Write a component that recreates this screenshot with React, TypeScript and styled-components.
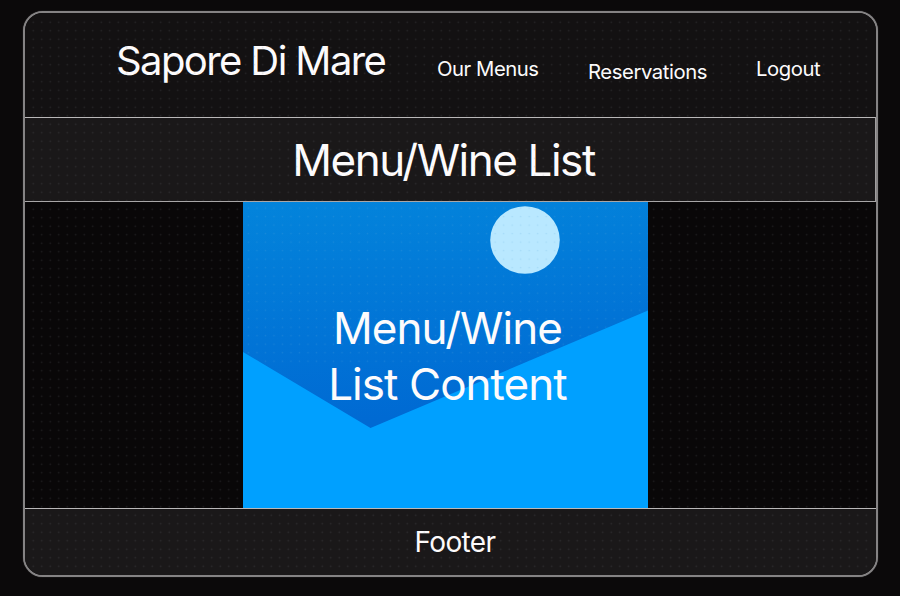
import React from "react";
import styled, { createGlobalStyle } from "styled-components";

const GlobalStyle = createGlobalStyle`
  * { box-sizing: border-box; }
  body {
    margin: 0;
    background: #0b090a;
    color: #fdfbfc;
    font-family: Inter, "Liberation Sans", sans-serif;
  }
`;

const Page = styled.div`
  width: 900px;
  height: 596px;
  padding: 11px 22px 19px 23px;
  overflow: hidden;
`;

const Frame = styled.div`
  position: relative;
  display: grid;
  grid-template-rows: 104px 84px 307px 1fr;
  height: 566px;
  border: 2px solid #858384;
  border-radius: 20px;
  box-shadow: 0 0 1px #6a6869;
  overflow: hidden;
  background: #0b090a;
`;

const DotGrid = styled.div`
  position: absolute;
  inset: 5px 5px 5px 4px;
  pointer-events: none;
  background-image: radial-gradient(circle at center, rgba(120, 125, 130, 0.22) 0.5px, transparent 1.1px);
  background-size: 8.507px 8.507px;
`;

const Header = styled.header`
  display: flex;
  align-items: flex-start;
  padding-left: 91px;
  background: #131112;
`;

const Label = styled.span<{ $size: number; $spacing: number }>`
  display: block;
  white-space: nowrap;
  line-height: 1.25;
  font-size: ${(p) => p.$size}px;
  letter-spacing: ${(p) => p.$spacing}px;
  font-weight: 400;
`;

const Brand = styled.div`
  width: 321px;
  padding-top: 23px;
`;

const Nav = styled.nav`
  display: flex;
`;

const NavItem = styled.a<{ $width: number; $drop: number }>`
  width: ${(p) => p.$width}px;
  padding-top: ${(p) => p.$drop}px;
  color: inherit;
`;

const Band = styled.section`
  display: flex;
  justify-content: center;
  align-items: center;
  padding: 2px 13px 0 0;
  background: #1a1819;
  border-top: 1px solid #b9b7b8;
  border-right: 1px solid #a09e9f;
`;

const Footer = styled(Band)`
  padding: 1px 0 0 9px;
  border-right: 0;
`;

const Content = styled.main`
  display: flex;
  padding-left: 218px;
  border-top: 1px solid #a9a7a8;
  background: #090708;
`;

const Picture = styled.div`
  position: relative;
  z-index: 1;
  display: grid;
  width: 405px;
  height: 306px;

  > * { grid-area: 1 / 1; }
`;

const Caption = styled.div`
  display: flex;
  flex-direction: column;
  align-items: center;
  padding: 98px 0 0 4px;
  z-index: 1;
`;

const Line = styled(Label)`
  line-height: 56px;
`;

function Scenery() {
  return (
    <svg width="405" height="306" viewBox="0 0 405 306" aria-hidden="true">
      <defs>
        <linearGradient id="sky" x1="0" y1="0" x2="18" y2="226" gradientUnits="userSpaceOnUse">
          <stop offset="0" stopColor="#0384db" />
          <stop offset="1" stopColor="#006ad3" />
        </linearGradient>
        <pattern id="specks" x="1.2" y="1.8" width="8.507" height="8.507" patternUnits="userSpaceOnUse">
          <circle cx="4.25" cy="4.25" r="0.8" fill="#5caad8" fillOpacity="0.22" />
        </pattern>
      </defs>
      <rect width="405" height="306" fill="url(#sky)" />
      <ellipse cx="282" cy="38" rx="34.8" ry="33.8" fill="#b9e8ff" />
      <rect width="405" height="165" fill="url(#specks)" />
      <path d="M0 150 L127.5 226 L405 108.5 V306 H0 Z" fill="#00a0ff" />
    </svg>
  );
}

export default function App() {
  return (
    <Page>
      <GlobalStyle />
      <Frame>
        <Header>
          <Brand>
            <Label $size={40} $spacing={-1.6}>Sapore Di Mare</Label>
          </Brand>
          <Nav>
            <NavItem $width={151} $drop={43}>
              <Label $size={20.3} $spacing={-0.45}>Our Menus</Label>
            </NavItem>
            <NavItem $width={168} $drop={46}>
              <Label $size={20.3} $spacing={-0.43}>Reservations</Label>
            </NavItem>
            <NavItem $width={90} $drop={43}>
              <Label $size={20.3} $spacing={-0.45}>Logout</Label>
            </NavItem>
          </Nav>
        </Header>
        <Band>
          <Label $size={44} $spacing={-1.45}>Menu/Wine List</Label>
        </Band>
        <Content>
          <Picture>
            <Scenery />
            <Caption>
              <Line $size={44} $spacing={-0.95}>Menu/Wine</Line>
              <Line $size={44} $spacing={-0.95}>List Content</Line>
            </Caption>
          </Picture>
        </Content>
        <Footer as="footer">
          <Label $size={28} $spacing={-0.65}>Footer</Label>
        </Footer>
        <DotGrid />
      </Frame>
    </Page>
  );
}
